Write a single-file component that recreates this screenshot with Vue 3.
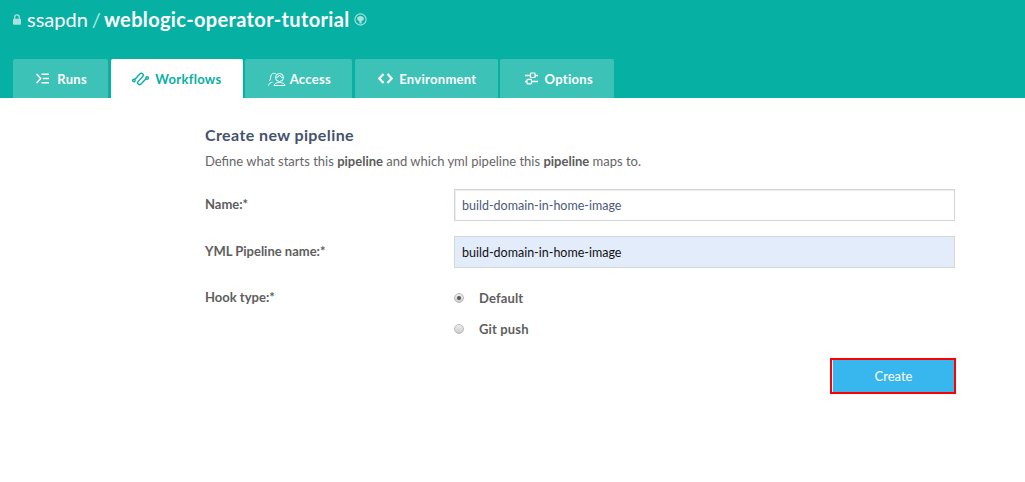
<template>
  <div class="page">
    <header class="header">
      <h1 class="title">
        <svg class="lock" width="8" height="11" viewBox="0 0 8 11">
          <path d="M1.700 5V3.200a2.300 2.300 0 0 1 4.600 0V5" fill="none" stroke="currentColor" stroke-width="1.300" />
          <rect x="0" y="4.800" width="8" height="6" rx="1" fill="currentColor" />
        </svg>
        <span class="owner">ssapdn</span>
        <span class="slash">/</span>
        <strong class="repo">weblogic-operator-tutorial</strong>
        <svg class="github" width="13" height="13" viewBox="0 0 13 13">
          <circle cx="6.500" cy="6.500" r="5.600" fill="none" stroke="currentColor" stroke-width="1.100" />
          <path d="M3.200 5.600C3.200 3.900 4.600 3 6.500 3s3.300.9 3.300 2.600c0 1.600-1 2.400-2.200 2.600v2.400H5.400V8.200C4.200 8 3.200 7.200 3.200 5.600z" fill="currentColor" />
        </svg>
      </h1>
      <nav class="tabs">
        <a v-for="tab in tabs" :key="tab.name" class="tab" :class="{ active: tab.active }" :style="{ width: tab.width + 'px', gap: tab.gap + 'px' }">
          <svg v-if="tab.name === 'Runs'" width="13" height="11" viewBox="0 0 13 11" fill="none" stroke="currentColor">
            <path d="M.6 1l4 4.500-4 4.500" stroke-width="1.600" />
            <path d="M5.500 1.200H13M6.800 5.500H13M5.500 9.800H13" stroke-width="1.500" />
          </svg>
          <svg v-else-if="tab.name === 'Workflows'" width="17" height="16" viewBox="0 0 17 16" fill="none" stroke="currentColor" stroke-width="1.400">
            <circle cx="1.900" cy="9.500" r="1.200" />
            <circle cx="15.100" cy="7" r="1.200" />
            <path d="M3 8.200L8 2.800a1.900 1.900 0 0 1 2.800 2.600L6.200 10.400a1.900 1.900 0 0 0 2.800 2.600L14 7.800" />
          </svg>
          <svg v-else-if="tab.name === 'Access'" width="18" height="14" viewBox="0 0 18 14" fill="none" stroke="currentColor" stroke-width="1">
            <path d="M8 2C6 .5 3 1.500 2.800 4.500c-.1 2-.6 3.500-1.600 4.500" />
            <path d="M.5 13.500c.3-2 2-3 4-3.500" />
            <circle cx="11.500" cy="5.500" r="4" />
            <path d="M7.500 5.500c2 0 3.500-1 4-2.500.5 1.500 2 2.500 4 2.500" />
            <path d="M6 13.500c.5-2 2.500-3 5.500-3s5 1 5.500 3z" />
          </svg>
          <svg v-else-if="tab.name === 'Environment'" width="15" height="11" viewBox="0 0 15 11" fill="none" stroke="currentColor" stroke-width="2.200">
            <path d="M5.500 1L1.300 5.500 5.500 10M9.500 1l4.200 4.500L9.500 10" />
          </svg>
          <svg v-else-if="tab.name === 'Options'" width="13" height="13" viewBox="0 0 13 13" fill="none" stroke="currentColor">
            <path d="M0 3.500h6M10 3.500h3M0 9.500h2M7 9.500h6" stroke-width="1.400" />
            <rect x="5.500" y="1" width="4.500" height="4.500" rx=".6" stroke-width="1.200" />
            <rect x="2" y="7.300" width="4.500" height="4.500" rx=".6" stroke-width="1.200" />
          </svg>
          <span>{{ tab.name }}</span>
        </a>
      </nav>
    </header>

    <main class="content">
      <h2 class="heading">Create new pipeline</h2>
      <p class="description">
        Define what starts this <b>pipeline</b> and which yml pipeline this <b>pipeline</b> maps to.
      </p>

      <form class="form" @submit.prevent>
        <label class="row">
          <span class="label">Name:*</span>
          <input v-model="name" class="input" type="text" />
        </label>
        <label class="row">
          <span class="label">YML Pipeline name:*</span>
          <input v-model="yml" class="input filled" type="text" />
        </label>
        <div class="row hook">
          <span class="label">Hook type:*</span>
          <div class="radios">
            <label v-for="opt in hooks" :key="opt" class="radio-row">
              <span class="radio" :class="{ checked: hook === opt }"></span>
              <span class="radio-text">{{ opt }}</span>
            </label>
          </div>
        </div>
        <div class="actions">
          <button class="create" type="submit">Create</button>
        </div>
      </form>
    </main>
  </div>
</template>

<script setup>
import { ref } from "vue";

const tabs = [
  { name: "Runs", width: 95, gap: 8 },
  { name: "Workflows", width: 132, gap: 6 },
  { name: "Access", width: 107, gap: 4 },
  { name: "Environment", width: 143, gap: 6 },
  { name: "Options", width: 114, gap: 7 },
];
tabs[1].active = true;

const hooks = ["Default", "Git push"];
const hook = ref("Default");
const name = ref("build-domain-in-home-image");
const yml = ref("build-domain-in-home-image");
</script>

<style scoped>
.page {
  width: 1025px;
  height: 482px;
  overflow: hidden;
  background: #fff;
  font-family: Lato, "Liberation Sans", sans-serif;
}

.header {
  height: 98px;
  background: #06b0a3;
  padding: 9px 0 0 13px;
  box-sizing: border-box;
  display: flex;
  flex-direction: column;
  justify-content: space-between;
}

.title {
  margin: 0;
  display: flex;
  align-items: center;
  font-size: 20px;
  line-height: 20px;
  font-weight: 400;
  color: #fff;
}

.lock {
  color: #a8e2dd;
  margin-right: 6px;
}

.slash {
  margin: 0 3px 0 4px;
  opacity: 0.7;
}

.repo {
  font-weight: 700;
  letter-spacing: 0.35px;
}

.github {
  color: #a8e2dd;
  margin-left: 4px;
}

.tabs {
  display: flex;
  gap: 2.500px;
  height: 39px;
}

.tab {
  display: flex;
  align-items: center;
  justify-content: flex-end;
  padding-right: 21px;
  box-sizing: border-box;
  background: #3cc2b7;
  color: #fff;
  font-size: 13px;
  font-weight: 700;
  letter-spacing: 0.3px;
  border-radius: 2px 2px 0 0;
}

.tab.active {
  background: #fff;
  color: #06b0a3;
}

.content {
  padding: 27px 0 0 205px;
  width: 750px;
}

.heading {
  margin: 0;
  font-size: 16px;
  line-height: 20px;
  font-weight: 700;
  letter-spacing: 0.4px;
  color: #44526e;
}

.description {
  margin: 8px 0 0;
  font-size: 13px;
  line-height: 16px;
  color: #666;
}

.description b {
  font-weight: 700;
  color: #5b5b5b;
}

.form {
  margin-top: 20px;
}

.row {
  display: grid;
  grid-template-columns: 249px 1fr;
  align-items: center;
  margin-bottom: 15px;
}

.label {
  font-size: 13px;
  font-weight: 700;
  color: #5e5e5e;
  margin-top: -2px;
}

.input {
  height: 32px;
  box-sizing: border-box;
  width: 100%;
  padding: 0 7px;
  border: 1px solid #d3d7d7;
  box-shadow: inset 1px 1px 0 #eceeee;
  background: #fff;
  color: #4a5a7a;
  font-family: inherit;
  font-size: 12.500px;
  outline: none;
}

.input.filled {
  background: #e3ecfb;
  color: #111;
  box-shadow: none;
}

.hook {
  align-items: start;
  margin-bottom: 0;
  padding-top: 6px;
}

.hook .label {
  margin-top: 0;
}

.radios {
  display: flex;
  flex-direction: column;
  gap: 15px;
  margin-top: 1px;
}

.radio-row {
  display: flex;
  align-items: center;
  height: 16px;
}

.radio {
  width: 10px;
  height: 10px;
  border-radius: 50%;
  border: 1px solid #bbb;
  background: linear-gradient(#eee, #ccc);
  box-sizing: border-box;
  position: relative;
}

.radio.checked::after {
  content: "";
  position: absolute;
  left: 2px;
  top: 2px;
  width: 4px;
  height: 4px;
  border-radius: 50%;
  background: #555;
}

.radio-text {
  margin-left: 15px;
  font-size: 13px;
  font-weight: 700;
  letter-spacing: 0.15px;
  color: #5e5e5e;
}

.actions {
  display: flex;
  justify-content: flex-end;
  margin-top: 21px;
  margin-right: -1px;
}

.create {
  width: 126px;
  height: 36px;
  box-sizing: border-box;
  border: 2px solid #f00;
  padding-left: 7px;
  background: #38b6ee;
  box-shadow: inset 1px 0 0 #d8f0fb;
  color: #fff;
  font-family: inherit;
  font-size: 13px;
}
</style>
